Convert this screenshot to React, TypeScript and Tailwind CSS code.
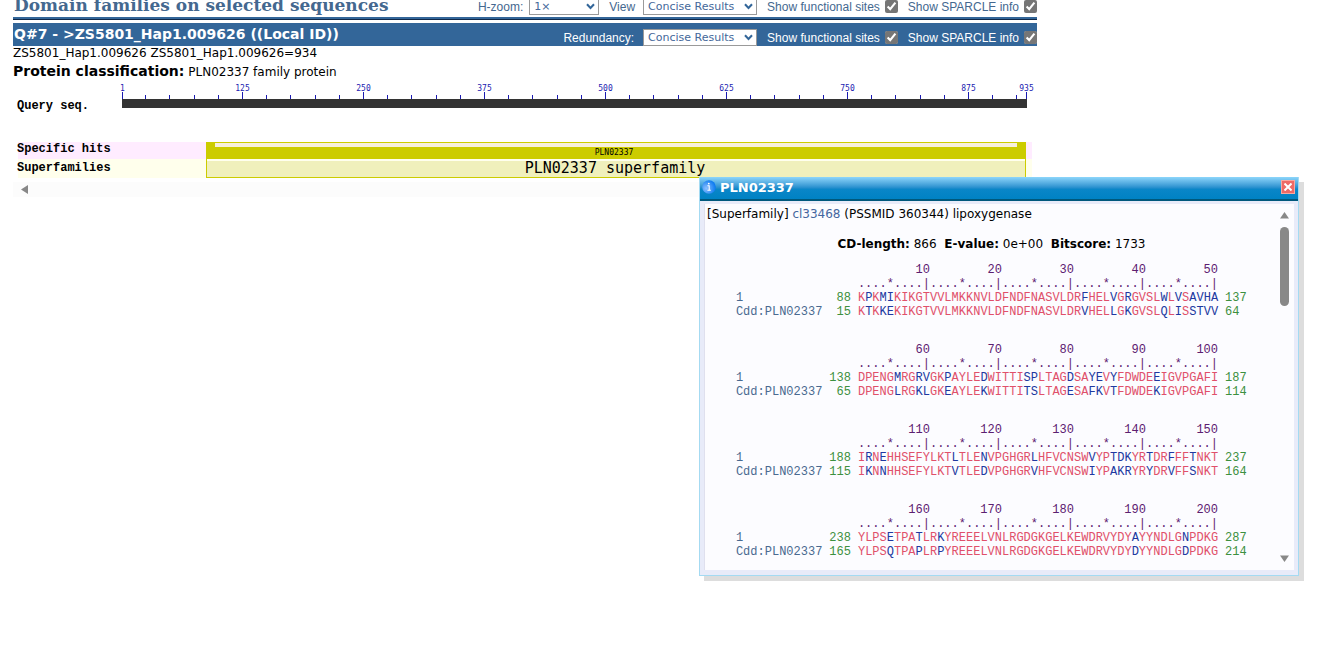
import { Fragment, useState } from 'react';

const SEQ_LENGTH = 935;
const BAR_X = 109;
const BAR_WIDTH = 905;

const majorTicks = [1, 125, 250, 375, 500, 625, 750, 875, 935];
const minorTicks = Array.from({ length: 37 }, (_, i) => (i + 1) * 25).filter((v) => v % 125 !== 0);

const blocks = [
  {
    start: 0,
    query: { from: 88, seq: 'KPKMIKIKGTVVLMKKNVLDFNDFNASVLDRFHELVGRGVSLWLVSAVHA', to: 137 },
    hit: { from: 15, seq: 'KTKKEKIKGTVVLMKKNVLDFNDFNASVLDRVHELLGKGVSLQLISSTVV', to: 64 },
  },
  {
    start: 50,
    query: { from: 138, seq: 'DPENGMRGRVGKPAYLEDWITTISPLTAGDSAYEVYFDWDEEIGVPGAFI', to: 187 },
    hit: { from: 65, seq: 'DPENGLRGKLGKEAYLEKWITTITSLTAGESAFKVTFDWDEKIGVPGAFI', to: 114 },
  },
  {
    start: 100,
    query: { from: 188, seq: 'IRNEHHSEFYLKTLTLENVPGHGRLHFVCNSWVYPTDKYRTDRFFFTNKT', to: 237 },
    hit: { from: 115, seq: 'IKNNHHSEFYLKTVTLEDVPGHGRVHFVCNSWIYPAKRYRYDRVFFSNKT', to: 164 },
  },
  {
    start: 150,
    query: { from: 238, seq: 'YLPSETPATLRKYREEELVNLRGDGKGELKEWDRVYDYAYYNDLGNPDKG', to: 287 },
    hit: { from: 165, seq: 'YLPSQTPAPLRPYREEELVNLRGDGKGELKEWDRVYDYDYYNDLGDPDKG', to: 214 },
  },
];

function tickX(value: number) {
  return Math.round(BAR_X + ((value - 1) * BAR_WIDTH) / SEQ_LENGTH) + 0.5;
}

function Select({ id, options, className }: { id: string; options: string[]; className: string }) {
  return (
    <span className="relative flex">
      <select
        id={id}
        className={`h-[17px] appearance-none border border-[#9a9a9a] bg-white pl-1 font-['DejaVu_Sans',sans-serif] text-[11px] leading-[15px] text-[#44689a] ${className}`}
      >
        {options.map((option) => (
          <option key={option}>{option}</option>
        ))}
      </select>
      <svg className="pointer-events-none absolute top-[5px] right-1 h-[7px] w-[9px]" viewBox="0 0 9 7" fill="none" stroke="#336699" strokeWidth="2">
        <path d="M1 1.2 4.5 5 8 1.2" />
      </svg>
    </span>
  );
}

function Check({ label }: { label: string }) {
  return (
    <label className="flex items-center gap-[5px] whitespace-nowrap">
      {label}
      <input type="checkbox" defaultChecked className="h-[13px] w-[13px] accent-[#767676]" />
    </label>
  );
}

function DomainGraph() {
  return (
    <svg className="block h-[98px] w-[1024px] shrink-0" viewBox="0 0 1024 98" fontFamily="'Liberation Mono', monospace">
      <g stroke="#1a1ab0" strokeWidth="1">
        {majorTicks.map((v) => (
          <line key={v} x1={tickX(v)} x2={tickX(v)} y1="8" y2="15" />
        ))}
        {minorTicks.map((v) => (
          <line key={v} x1={tickX(v)} x2={tickX(v)} y1="11" y2="15" />
        ))}
      </g>
      <g fill="#1a1ab0" fontSize="8" fontFamily="'DejaVu Sans Mono', monospace" textAnchor="middle">
        {majorTicks.map((v) => (
          <text key={v} x={tickX(v)} y="7">{v}</text>
        ))}
      </g>
      <rect x={BAR_X} y="15" width={BAR_WIDTH} height="9" fill="#333333" />

      <rect x="5" y="58" width="1014" height="17" fill="#ffecff" />
      <rect x="5" y="75" width="1014" height="19" fill="#ffffec" />
      <rect x="193" y="58" width="820" height="17" fill="#cccc00" />
      <rect x="202" y="59" width="802" height="4" fill="#f7f0dc" />
      <rect x="193.5" y="75.5" width="819" height="18" fill="#f0f0bc" stroke="#cccc00" />
      <rect x="194" y="75" width="818" height="2" fill="#ffffee" />

      <g fill="#000" fontSize="12" fontWeight="bold">
        <text x="4" y="25">Query seq.</text>
        <text x="4" y="68">Specific hits</text>
        <text x="4" y="87">Superfamilies</text>
      </g>
      <g fill="#000" fontFamily="'DejaVu Sans Mono', monospace" textAnchor="middle">
        <text x="601" y="71" fontSize="8">PLN02337</text>
        <text x="602" y="89" fontSize="15">PLN02337 superfamily</text>
      </g>
    </svg>
  );
}

function Residues({ seq, other }: { seq: string; other: string }) {
  return (
    <td className="px-[7px] align-top">
      {seq.split('').map((c, i) => (
        <span key={i} className={c === other[i] ? 'text-[#e0506a]' : 'text-[#2038a0]'}>{c}</span>
      ))}
    </td>
  );
}

function Alignment() {
  return (
    <table className="mx-auto mt-[11px] border-collapse font-['Liberation_Mono',monospace] text-xs leading-[14px] whitespace-pre text-[#4a6a90]">
      <tbody>
        {blocks.map(({ start, query, hit }) => (
          <Fragment key={start}>
            <tr className="text-[#5c2070]">
              <td colSpan={2} />
              <td className="px-[7px]">{[10, 20, 30, 40, 50].map((n) => String(start + n).padStart(10)).join('')}</td>
              <td />
            </tr>
            <tr className="text-[#5c2070]">
              <td colSpan={2} />
              <td className="px-[7px]">{'....*....|'.repeat(5)}</td>
              <td />
            </tr>
            <tr>
              <td className="w-[93px]">1</td>
              <td className="w-[22px] text-right text-[#3c9040]">{query.from}</td>
              <Residues seq={query.seq} other={hit.seq} />
              <td className="w-[22px] text-[#3c9040]">{query.to}</td>
            </tr>
            <tr>
              <td className="pb-6">Cdd:PLN02337</td>
              <td className="text-right align-top text-[#3c9040]">{hit.from}</td>
              <Residues seq={hit.seq} other={query.seq} />
              <td className="align-top text-[#3c9040]">{hit.to}</td>
            </tr>
          </Fragment>
        ))}
      </tbody>
    </table>
  );
}

function HitPopup({ onClose }: { onClose: () => void }) {
  return (
    <section className="absolute top-[177px] left-[699px] flex h-[399px] w-[600px] flex-col border border-t-0 border-[#a4daf2] bg-[#e8ebf9] text-xs text-black shadow-[5px_5px_0_#dddddd]">
      <header className="flex h-6 shrink-0 items-center border-b-2 border-[#00587c] bg-linear-to-b from-[#8cd6fb] via-[#0a86c8] via-55% to-[#0082c4] pr-[3px] pl-[2px]">
        <svg className="mb-[2px] h-[14px] w-[14px]" viewBox="0 0 14 14">
          <defs>
            <radialGradient id="info" cx="0.3" cy="0.6" r="0.7">
              <stop offset="0" stopColor="#8cc0ff" />
              <stop offset="1" stopColor="#0878f0" />
            </radialGradient>
          </defs>
          <circle cx="7" cy="7" r="6.8" fill="url(#info)" />
          <path d="M5.4 5.8h1.8v4.2M5.4 10.2h3.4" fill="none" stroke="#fff" strokeWidth="1.1" />
          <circle cx="6.8" cy="3.6" r="0.9" fill="#fff" />
        </svg>
        <h2 className="ml-1 flex-1 text-[13px] font-bold text-white">PLN02337</h2>
        <button type="button" aria-label="Close" onClick={onClose} className="mb-[2px] flex h-[14px] w-[14px] items-center justify-center border border-[#f8a8a0] bg-[#ee6a66]">
          <svg className="h-2 w-2" viewBox="0 0 8 8" stroke="#fff" strokeWidth="2">
            <path d="m0.5 0.5 7 7M7.5 0.5l-7 7" />
          </svg>
        </button>
      </header>
      <div className="mx-1 mt-[3px] mb-[5px] flex min-h-0 flex-1 border-l border-[#dfe0ee] bg-[#fcfcff]">
        <div className="min-w-0 flex-1 overflow-hidden pt-[2px]">
          <p className="pl-[2px] leading-4">
            [Superfamily] <a href="#cl33468" className="text-[#4466a0]">cl33468</a> (PSSMID 360344) lipoxygenase
          </p>
          <p className="mt-[14px] text-center leading-4 whitespace-pre">
            <b>CD-length:</b> 866{'  '}<b>E-value:</b> 0e+00{'  '}<b>Bitscore:</b> 1733
          </p>
          <Alignment />
        </div>
        <div className="flex w-4 flex-col items-start pt-2 pb-2 pl-[2px]">
          <svg className="h-[7px] w-[9px]" viewBox="0 0 9 7"><path d="M4.5 0 9 6.5H0z" fill="#888" /></svg>
          <div className="mt-2 h-[79px] w-[9px] rounded-full bg-[#888888]" />
          <svg className="mt-auto h-[7px] w-[9px]" viewBox="0 0 9 7"><path d="M0 .5h9L4.5 7z" fill="#888" /></svg>
        </div>
      </div>
    </section>
  );
}

export default function App() {
  const [popupOpen, setPopupOpen] = useState(true);

  return (
    <div className="relative min-h-screen overflow-hidden bg-white font-['DejaVu_Sans',sans-serif] text-xs text-black">
      <main className="ml-[13px] w-full max-w-5xl">
        <div className="-mt-2 flex h-[28px] items-end border-b border-[#102848]">
          <div className="flex h-[27px] w-full items-end justify-between border-b-2 border-[#336699] text-[#44688f]">
            <h1 className="pl-px font-['DejaVu_Serif',serif] text-[17px] leading-6 font-bold whitespace-nowrap">
              Domain families on selected sequences
            </h1>
            <div className="flex items-center pb-[2px] font-['Liberation_Sans',sans-serif]">
              <label htmlFor="hzoom" className="mr-[6px]">H-zoom:</label>
              <Select id="hzoom" options={['1×', '2×', '4×']} className="w-[70px]" />
              <label htmlFor="view" className="mr-2 ml-[10px]">View</label>
              <Select id="view" options={['Concise Results', 'Standard Results', 'Full Results']} className="w-[114px]" />
              <div className="ml-[10px] flex gap-[10px]">
                <Check label="Show functional sites" />
                <Check label="Show SPARCLE info" />
              </div>
            </div>
          </div>
        </div>

        <div className="mt-[3px] flex h-[23px] items-center justify-between bg-[#336699] text-white">
          <h2 className="pl-px text-[14px] font-bold whitespace-nowrap">Q#7 - &gt;ZS5801_Hap1.009626 ((Local ID))</h2>
          <div className="flex items-center self-end font-['Liberation_Sans',sans-serif]">
            <label htmlFor="redundancy" className="mr-[9px]">Redundancy:</label>
            <Select id="redundancy" options={['Concise Results', 'Standard Results', 'Full Results']} className="w-[114px]" />
            <div className="ml-[10px] flex gap-[10px]">
              <Check label="Show functional sites" />
              <Check label="Show SPARCLE info" />
            </div>
          </div>
        </div>

        <p className="leading-[15px]">ZS5801_Hap1.009626 ZS5801_Hap1.009626=934</p>
        <p className="mb-[2px] leading-5">
          <b className="text-[14px]">Protein classification:</b> PLN02337 family protein
        </p>

        <DomainGraph />

        <div className="flex h-[15px] items-center bg-[#fcfcfc] pl-2">
          <svg className="h-[9px] w-[7px]" viewBox="0 0 7 9"><path d="M7 0v9L0 4.5z" fill="#888" /></svg>
        </div>
      </main>

      {popupOpen && <HitPopup onClose={() => setPopupOpen(false)} />}
    </div>
  );
}
